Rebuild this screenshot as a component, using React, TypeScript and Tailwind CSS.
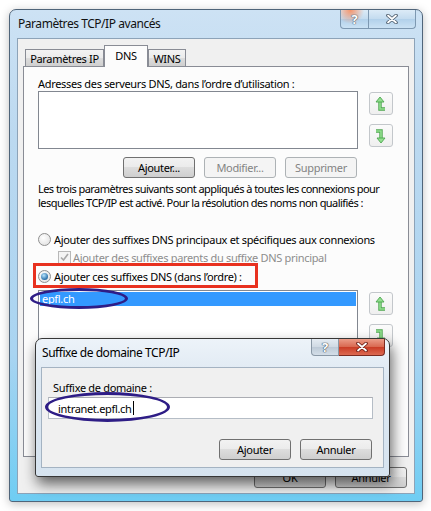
import React from "react";

function Btn({ label, disabled, className = "" }: { label: string; disabled?: boolean; className?: string }) {
  return (
    <div
      className={`flex h-[21px] w-[72px] items-center justify-center rounded-[3px] border leading-none ${
        disabled
          ? "border-[#adb2b5] bg-[#f4f4f4] text-[#838383]"
          : "border-[#707070] bg-[linear-gradient(#f2f2f2,#ebebeb_50%,#dddddd_50%,#cfcfcf)] text-black"
      } ${className}`}
    >
      {label}
    </div>
  );
}

function MoveBtn({ dir }: { dir: "up" | "down" }) {
  return (
    <div className="flex h-[23px] w-[24px] items-center justify-center rounded-[3px] border border-[#c3c7cb] bg-[linear-gradient(#fbfbfb,#efefef)]">
      <svg width="12" height="16" viewBox="0 0 12 16">
        {dir === "up" ? (
          <>
            <path d="M5 5V13H10" fill="none" stroke="#4da64f" strokeWidth="3.4" />
            <path d="M5 5V13H10" fill="none" stroke="#93e08f" strokeWidth="1.6" />
            <path d="M5 1L1 6H9Z" fill="#93e08f" stroke="#4da64f" strokeWidth="0.9" strokeLinejoin="round" />
          </>
        ) : (
          <>
            <path d="M1 3H6V11" fill="none" stroke="#4da64f" strokeWidth="3.4" />
            <path d="M1 3H6V11" fill="none" stroke="#93e08f" strokeWidth="1.6" />
            <path d="M6 15L2 10H10Z" fill="#93e08f" stroke="#4da64f" strokeWidth="0.9" strokeLinejoin="round" />
          </>
        )}
      </svg>
    </div>
  );
}

function Radio({ checked }: { checked?: boolean }) {
  return (
    <div className="flex h-[13px] w-[13px] shrink-0 items-center justify-center rounded-full border border-[#8f8f8f] bg-[radial-gradient(circle_at_40%_35%,#ffffff,#dcdcdc)]">
      {checked && (
        <div className="h-[7px] w-[7px] rounded-full bg-[radial-gradient(circle_at_40%_35%,#b9e6ff,#2a6fa8_70%,#1b4f7c)]" />
      )}
    </div>
  );
}

function XGlyph({ dark }: { dark?: boolean }) {
  return (
    <svg width="12" height="10" viewBox="0 0 12 10">
      <path d="M2 1.5L10 8.5M10 1.5L2 8.5" stroke={dark ? "#4c5c6c" : "#6b1d15"} strokeWidth="3.6" strokeLinecap="round" />
      <path d="M2 1.5L10 8.5M10 1.5L2 8.5" stroke="#ffffff" strokeWidth="1.8" strokeLinecap="round" />
    </svg>
  );
}

function Tab({ label, className }: { label: string; className: string }) {
  return (
    <div
      className={`mb-px flex h-[17px] items-center justify-center whitespace-nowrap border border-b-0 border-[#898c95] bg-[linear-gradient(#f3f3f3,#ebebeb_50%,#dddddd_50%,#cfcfcf)] ${className}`}
    >
      {label}
    </div>
  );
}

export default function App() {
  return (
    <div className="relative h-[511px] w-[431px] overflow-hidden bg-white pl-[9px] pt-[9px] font-['Noto_Sans',sans-serif] text-[11px] leading-[15px] tracking-[-0.32px] text-black">
      {/* main window */}
      <div className="flex h-[493px] w-[414px] flex-col rounded-t-[7px] rounded-b-[3px] border border-[#50657a] bg-[linear-gradient(180deg,#cde2f4,#bcd9f0_25%,#a9d4f1_70%,#6fcdf3)] px-[7px] pb-[7px] shadow-[0_2px_10px_rgba(0,0,0,0.25)]">
        <div className="flex h-[28px] shrink-0 items-start justify-between">
          <span className="mt-[6px] pl-px text-[12px] tracking-[-0.45px] text-[#111]">Paramètres TCP/IP avancés</span>
          <div className="-mr-px flex h-[19px]">
            <div className="flex w-[29px] items-center justify-center rounded-bl-[4px] border border-t-0 border-[#7d98b1] bg-[radial-gradient(circle_at_35%_0%,rgba(255,120,60,0.75),transparent_55%),linear-gradient(#dcebf7,#c3dbef_50%,#b1d0ea_50%,#cbe2f4)] text-[13px] font-bold text-white [text-shadow:0_0_1px_#4c5c6c,0_0_1px_#4c5c6c,0_0_1px_#4c5c6c]">
              ?
            </div>
            <div className="flex w-[47px] items-center justify-center rounded-br-[4px] border border-l-0 border-t-0 border-[#7d98b1] bg-[linear-gradient(#dcebf7,#c3dbef_50%,#b1d0ea_50%,#cbe2f4)]">
              <XGlyph dark />
            </div>
          </div>
        </div>

        <div className="flex flex-1 flex-col border border-[#8da3b8] bg-[#f0f0f0] px-[5px] pt-[6px]">
          {/* tabs */}
          <div className="relative z-10 -mb-px flex h-[22px] items-end pl-[2px]">
            <Tab label="Paramètres IP" className="w-[79px]" />
            <div className="flex h-[22px] w-[44px] justify-center border border-b-0 border-[#898c95] bg-[#fcfcfc] pt-[2px]">DNS</div>
            <Tab label="WINS" className="w-[38px]" />
          </div>

          {/* tab panel */}
          <div className="h-[391px] border border-[#898c95] bg-[#fcfcfc] px-[14px] pt-[9px]">
            <div>Adresses des serveurs DNS, dans l’ordre d’utilisation :</div>
            <div className="flex items-start gap-[11px]">
              <div className="h-[58px] w-[320px] border border-[#828790] bg-white" />
              <div className="mt-px flex flex-col gap-[9px]">
                <MoveBtn dir="up" />
                <MoveBtn dir="down" />
              </div>
            </div>
            <div className="mt-[8px] flex w-[320px] justify-end gap-[9px] pr-px">
              <Btn label="Ajouter..." />
              <Btn label="Modifier..." disabled />
              <Btn label="Supprimer" disabled />
            </div>
            <p className="mt-[4px] whitespace-nowrap leading-[14px] tracking-[-0.55px]">
              Les trois paramètres suivants sont appliqués à toutes les connexions pour
              <br />
              lesquelles TCP/IP est activé. Pour la résolution des noms non qualifiés :
            </p>
            <div className="mt-[21px] flex h-[16px] items-center gap-[3px] whitespace-nowrap">
              <Radio />
              <span>Ajouter des suffixes DNS principaux et spécifiques aux connexions</span>
            </div>
            <div className="mt-[2px] flex h-[16px] items-center gap-[2px] whitespace-nowrap pl-[20px] text-[#8d8d8d]">
              <div className="flex h-[13px] w-[13px] shrink-0 items-center justify-center border border-[#b8b8b8] bg-[#f4f4f4]">
                <svg width="9" height="9" viewBox="0 0 9 9">
                  <path d="M1 4.5L3.5 7L8 1" fill="none" stroke="#a8a8a8" strokeWidth="1.6" />
                </svg>
              </div>
              <span>Ajouter des suffixes parents du suffixe DNS principal</span>
            </div>
            <div className="mt-[3px] flex h-[16px] items-center gap-[3px] whitespace-nowrap">
              <Radio checked />
              <span>Ajouter ces suffixes DNS (dans l’ordre) :</span>
            </div>
            <div className="mt-[6px] flex items-start gap-[11px]">
              <div className="h-[110px] w-[320px] border border-[#828790] bg-white p-px">
                <div className="h-[14px] bg-[#3399ff] pl-[2px] leading-[14px] text-white">epfl.ch</div>
              </div>
              <div className="mt-[2px] flex flex-col gap-[9px]">
                <MoveBtn dir="up" />
                <MoveBtn dir="down" />
              </div>
            </div>
          </div>

          <div className="mt-[10px] flex justify-end gap-[9px] pr-[2px]">
            <Btn label="OK" />
            <Btn label="Annuler" />
          </div>
        </div>
      </div>

      {/* child dialog */}
      <div className="absolute left-[35px] top-[338px] flex h-[139px] w-[355px] flex-col rounded-t-[7px] rounded-b-[3px] border border-[#363636] bg-[linear-gradient(180deg,#edf3f9,#dde8f2_30%,#d6e3ef)] px-[5px] pb-[8px] shadow-[2px_7px_14px_rgba(0,0,0,0.6)]">
        <div className="flex h-[28px] shrink-0 items-start justify-between">
          <span className="mt-[6px] pl-px text-[12px] tracking-[-0.45px]">Suffixe de domaine TCP/IP</span>
          <div className="-mr-px flex h-[17px]">
            <div className="flex w-[28px] items-center justify-center rounded-bl-[4px] border border-t-0 border-[#8a98a6] bg-[linear-gradient(#e4ebf2,#cfd9e3_50%,#bcc9d6_50%,#d4dee8)] text-[13px] font-bold text-white [text-shadow:0_0_1px_#3f4c59,0_0_1px_#3f4c59,0_0_1px_#3f4c59]">
              ?
            </div>
            <div className="flex w-[46px] items-center justify-center rounded-br-[4px] border border-l-0 border-t-0 border-[#7a2a20] bg-[linear-gradient(#eb9c88,#d8674f_50%,#c93b24_50%,#dc6a52)]">
              <XGlyph />
            </div>
          </div>
        </div>
        <div className="flex flex-1 flex-col border border-[#a4b3c2] bg-[#f0f0f0] pl-[6px] pr-[10px] pt-[12px]">
          <div className="pl-[5px]">Suffixe de domaine :</div>
          <div className="mt-[2px] flex h-[22px] items-center border border-[#b5bdc6] border-t-[#abadb3] bg-white pl-[9px]">
            <span>intranet.epfl.ch</span>
            <span className="ml-px h-[14px] w-px bg-black" />
          </div>
          <div className="mt-[20px] flex justify-end gap-[9px] pr-px">
            <Btn label="Ajouter" />
            <Btn label="Annuler" />
          </div>
        </div>
      </div>

      {/* annotations */}
      <div className="absolute left-[33px] top-[263px] h-[25px] w-[225px] border-[3px] border-[#e8311f]" />
      <div className="absolute left-[30px] top-[288px] h-[21px] w-[98px] rounded-[50%] border-[3px] border-[#2e1d86]" />
      <div className="absolute left-[45px] top-[392px] h-[30px] w-[125px] rounded-[50%] border-[3px] border-[#2e1d86]" />
    </div>
  );
}
